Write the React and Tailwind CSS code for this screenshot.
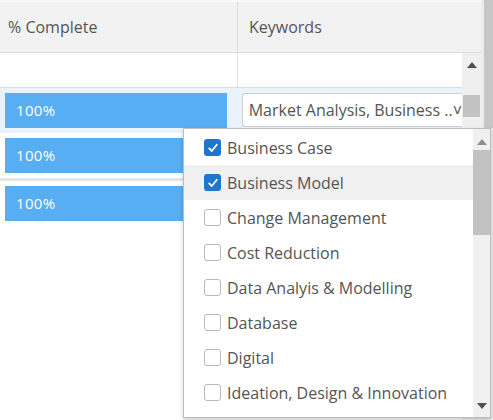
import React from 'react';

const keywords = [
  { label: 'Business Case', checked: true },
  { label: 'Business Model', checked: true, hover: true },
  { label: 'Change Management' },
  { label: 'Cost Reduction' },
  { label: 'Data Analyis & Modelling' },
  { label: 'Database' },
  { label: 'Digital' },
  { label: 'Ideation, Design & Innovation' },
];

const font = { fontFamily: '"Open Sans", "Liberation Sans", sans-serif' };

const Bar = () => (
  <div className="h-[35px] w-[222px] bg-[#57aef2] text-white text-[15px] tracking-[0.3px] flex items-center pl-[11px]">100%</div>
);

const UpArrow = ({ className = '' }) => (
  <svg width="10" height="6" viewBox="0 0 10 6" className={className}>
    <path d="M0 6 L5 0 L10 6 Z" fill="#505050" />
  </svg>
);

const DownArrow = ({ className = '' }) => (
  <svg width="10" height="6" viewBox="0 0 10 6" className={className}>
    <path d="M0 0 L5 6 L10 0 Z" fill="#505050" />
  </svg>
);

const Checkbox = ({ checked }) =>
  checked ? (
    <span className="w-[17px] h-[17px] rounded-[3px] bg-[#1f76cf] flex items-center justify-center shrink-0">
      <svg width="12" height="12" viewBox="0 0 12 12">
        <path d="M2.2 6.4 L4.8 9 L9.8 2.8" fill="none" stroke="white" strokeWidth="1.8" strokeLinecap="round" strokeLinejoin="round" />
      </svg>
    </span>
  ) : (
    <span className="w-[17px] h-[17px] rounded-[3px] border border-[#b9b9b9] bg-white shrink-0" />
  );

export default function App() {
  return (
    <div className="relative w-[493px] h-[420px] overflow-hidden bg-white flex" style={font}>
      {/* page */}
      <div className="w-[481px] flex flex-col">
        {/* header */}
        <div className="h-[53px] bg-[#f2f2f2] border-t-2 border-t-[#fafafa] border-b border-[#dedede] flex text-[16px] text-[#555]">
          <div className="w-[238px] border-r border-[#dcdcdc] flex items-center pl-[8px]">% Complete</div>
          <div className="flex-1 flex items-center pl-[11px]">Keywords</div>
        </div>
        {/* body */}
        <div className="flex flex-1">
          <div className="w-[462px] flex flex-col">
            <div className="h-[35px] flex border-b border-[#cfe1f1]">
              <div className="w-[238px] border-r border-[#e2e2e2]" />
              <div className="flex-1" />
            </div>
            <div className="h-[45px] flex bg-[#eaf3fb]">
              <div className="w-[238px] pl-[5px] pt-[5px]">
                <Bar />
              </div>
              <div className="flex-1 pl-[5px] pt-[5px]">
                <div className="h-[34px] bg-white border border-[#cfcfcf] rounded-l-[3px] border-r-0 flex items-center pl-[6px] text-[16px] text-[#555] whitespace-nowrap overflow-hidden">
                  Market Analysis, Business ..<span className="text-[#555]">˅</span>
                </div>
              </div>
            </div>
            <div className="h-[48px] flex border-b-[3px] border-[#e6e6e6]">
              <div className="w-[238px] pl-[5px] pt-[5px]">
                <Bar />
              </div>
            </div>
            <div className="h-[46px] flex">
              <div className="w-[238px] pl-[5px] pt-[5px]">
                <Bar />
              </div>
            </div>
          </div>
          {/* table scrollbar */}
          <div className="w-[19px] bg-[#efefef] flex flex-col items-center">
            <UpArrow className="mt-[9px]" />
            <div className="mt-[27px] w-[17px] h-[22px] bg-[#c2c2c2]" />
          </div>
        </div>
      </div>
      {/* outer scrollbar */}
      <div className="w-[12px] bg-[#ececec] flex flex-col">
        <div className="ml-[3px] w-[9px] h-[128px] bg-[#c6c6c6]" />
      </div>

      {/* dropdown overlay */}
      <div className="absolute left-[183px] top-[128px] w-[308px] h-[290px] bg-white border border-[#bdbdbd] shadow-[0_2px_4px_rgba(0,0,0,0.2)] flex">
        <div className="flex-1 pt-[1px] flex flex-col">
          {keywords.map((k) => (
            <div
              key={k.label}
              className={`h-[35px] flex items-center gap-[6px] pl-[20px] text-[16px] text-[#555] whitespace-nowrap ${k.hover ? 'bg-[#f0f0f0]' : ''}`}
            >
              <Checkbox checked={k.checked} />
              <span>{k.label}</span>
            </div>
          ))}
        </div>
        <div className="w-[17px] bg-[#f0f0f0] flex flex-col items-center">
          <UpArrow className="mt-[10px] opacity-60" />
          <div className="mt-[5px] w-[17px] h-[85px] bg-[#c2c2c2]" />
          <div className="flex-1" />
          <DownArrow className="mb-[8px]" />
        </div>
      </div>
    </div>
  );
}
